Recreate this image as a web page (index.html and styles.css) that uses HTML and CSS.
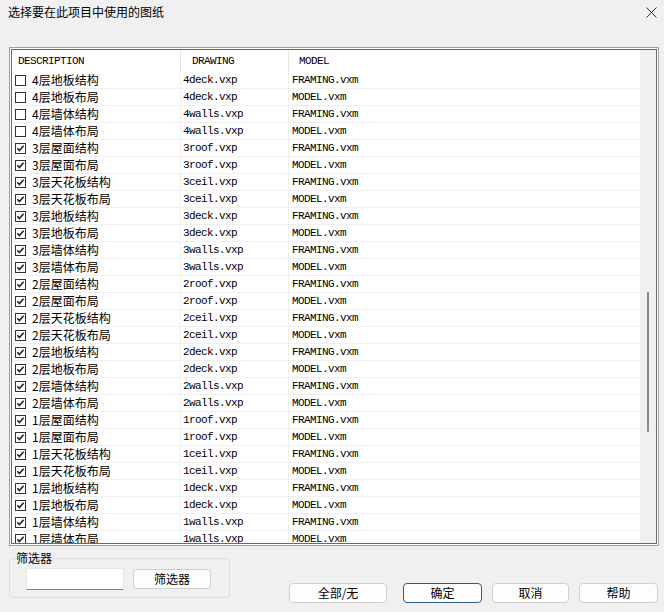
FILE: index.html
```html
<!DOCTYPE html>
<html lang="zh-CN">
<head>
    <meta charset="UTF-8">
    <meta name="viewport" content="width=device-width, initial-scale=1.0">
    <link rel="stylesheet" href="styles.css">
    <title>选择要在此项目中使用的图纸</title>
</head>
<body>

    <div class="titlebar">
        <span class="title">选择要在此项目中使用的图纸</span>
        <svg class="close" width="11" height="11" viewBox="0 0 11 11">
            <path d="M0.5 0.5 L10.5 10.5 M10.5 0.5 L0.5 10.5" stroke="#333" stroke-width="1" fill="none"/>
        </svg>
    </div>

    <div class="listbox">
        <div class="listinner">
            <div class="grid">
                <div class="head">
                    <div class="c1 mono">DESCRIPTION</div>
                    <div class="c2 mono">DRAWING</div>
                    <div class="c3 mono">MODEL</div>
                </div>

                <div class="row"><div class="c1"><span class="box"></span>4层地板结构</div><div class="c2 mono">4deck.vxp</div><div class="c3 mono">FRAMING.vxm</div></div>
                <div class="row"><div class="c1"><span class="box"></span>4层地板布局</div><div class="c2 mono">4deck.vxp</div><div class="c3 mono">MODEL.vxm</div></div>
                <div class="row"><div class="c1"><span class="box"></span>4层墙体结构</div><div class="c2 mono">4walls.vxp</div><div class="c3 mono">FRAMING.vxm</div></div>
                <div class="row"><div class="c1"><span class="box"></span>4层墙体布局</div><div class="c2 mono">4walls.vxp</div><div class="c3 mono">MODEL.vxm</div></div>

                <div class="row"><div class="c1"><span class="box checked"></span>3层屋面结构</div><div class="c2 mono">3roof.vxp</div><div class="c3 mono">FRAMING.vxm</div></div>
                <div class="row"><div class="c1"><span class="box checked"></span>3层屋面布局</div><div class="c2 mono">3roof.vxp</div><div class="c3 mono">MODEL.vxm</div></div>
                <div class="row"><div class="c1"><span class="box checked"></span>3层天花板结构</div><div class="c2 mono">3ceil.vxp</div><div class="c3 mono">FRAMING.vxm</div></div>
                <div class="row"><div class="c1"><span class="box checked"></span>3层天花板布局</div><div class="c2 mono">3ceil.vxp</div><div class="c3 mono">MODEL.vxm</div></div>
                <div class="row"><div class="c1"><span class="box checked"></span>3层地板结构</div><div class="c2 mono">3deck.vxp</div><div class="c3 mono">FRAMING.vxm</div></div>
                <div class="row"><div class="c1"><span class="box checked"></span>3层地板布局</div><div class="c2 mono">3deck.vxp</div><div class="c3 mono">MODEL.vxm</div></div>
                <div class="row"><div class="c1"><span class="box checked"></span>3层墙体结构</div><div class="c2 mono">3walls.vxp</div><div class="c3 mono">FRAMING.vxm</div></div>
                <div class="row"><div class="c1"><span class="box checked"></span>3层墙体布局</div><div class="c2 mono">3walls.vxp</div><div class="c3 mono">MODEL.vxm</div></div>

                <div class="row"><div class="c1"><span class="box checked"></span>2层屋面结构</div><div class="c2 mono">2roof.vxp</div><div class="c3 mono">FRAMING.vxm</div></div>
                <div class="row"><div class="c1"><span class="box checked"></span>2层屋面布局</div><div class="c2 mono">2roof.vxp</div><div class="c3 mono">MODEL.vxm</div></div>
                <div class="row"><div class="c1"><span class="box checked"></span>2层天花板结构</div><div class="c2 mono">2ceil.vxp</div><div class="c3 mono">FRAMING.vxm</div></div>
                <div class="row"><div class="c1"><span class="box checked"></span>2层天花板布局</div><div class="c2 mono">2ceil.vxp</div><div class="c3 mono">MODEL.vxm</div></div>
                <div class="row"><div class="c1"><span class="box checked"></span>2层地板结构</div><div class="c2 mono">2deck.vxp</div><div class="c3 mono">FRAMING.vxm</div></div>
                <div class="row"><div class="c1"><span class="box checked"></span>2层地板布局</div><div class="c2 mono">2deck.vxp</div><div class="c3 mono">MODEL.vxm</div></div>
                <div class="row"><div class="c1"><span class="box checked"></span>2层墙体结构</div><div class="c2 mono">2walls.vxp</div><div class="c3 mono">FRAMING.vxm</div></div>
                <div class="row"><div class="c1"><span class="box checked"></span>2层墙体布局</div><div class="c2 mono">2walls.vxp</div><div class="c3 mono">MODEL.vxm</div></div>

                <div class="row"><div class="c1"><span class="box checked"></span>1层屋面结构</div><div class="c2 mono">1roof.vxp</div><div class="c3 mono">FRAMING.vxm</div></div>
                <div class="row"><div class="c1"><span class="box checked"></span>1层屋面布局</div><div class="c2 mono">1roof.vxp</div><div class="c3 mono">MODEL.vxm</div></div>
                <div class="row"><div class="c1"><span class="box checked"></span>1层天花板结构</div><div class="c2 mono">1ceil.vxp</div><div class="c3 mono">FRAMING.vxm</div></div>
                <div class="row"><div class="c1"><span class="box checked"></span>1层天花板布局</div><div class="c2 mono">1ceil.vxp</div><div class="c3 mono">MODEL.vxm</div></div>
                <div class="row"><div class="c1"><span class="box checked"></span>1层地板结构</div><div class="c2 mono">1deck.vxp</div><div class="c3 mono">FRAMING.vxm</div></div>
                <div class="row"><div class="c1"><span class="box checked"></span>1层地板布局</div><div class="c2 mono">1deck.vxp</div><div class="c3 mono">MODEL.vxm</div></div>
                <div class="row"><div class="c1"><span class="box checked"></span>1层墙体结构</div><div class="c2 mono">1walls.vxp</div><div class="c3 mono">FRAMING.vxm</div></div>
                <div class="row"><div class="c1"><span class="box checked"></span>1层墙体布局</div><div class="c2 mono">1walls.vxp</div><div class="c3 mono">MODEL.vxm</div></div>
            </div>
            <div class="scrollbar"><div class="thumb"></div></div>
        </div>
    </div>

    <div class="bottom">
        <fieldset class="filter">
            <legend>筛选器</legend>
            <div class="filter-row">
                <input type="text" class="filter-input">
                <button type="button" class="btn filter-btn">筛选器</button>
            </div>
        </fieldset>

        <div class="actions">
            <button type="button" class="btn btn-all">全部/无</button>
            <button type="button" class="btn btn-ok">确定</button>
            <button type="button" class="btn btn-cancel">取消</button>
            <button type="button" class="btn btn-help">帮助</button>
        </div>
    </div>

</body>
</html>
```

FILE: styles.css
```css
body {
    margin: 0;
    width: 664px;
    height: 612px;
    overflow: hidden;
    background-color: #f0f0f0;
    font-family: "Noto Sans CJK SC", sans-serif;
    font-size: 12px;
    color: #000;
}

.titlebar {
    display: flex;
    justify-content: space-between;
    align-items: center;
    height: 24px;
    padding: 0 7px 0 8px;
}

.title {
    line-height: 14px;
}

/* list view */

.listbox {
    box-sizing: border-box;
    width: 650px;
    height: 499px;
    margin: 23px 0 0 9px;
    padding: 1px;
    border: 1px solid #a0a0a0;
    background-color: #fff;
}

.listinner {
    box-sizing: border-box;
    display: flex;
    height: 100%;
    border: 1px solid #696969;
}

.grid {
    flex: 1;
    overflow: hidden;
}

.mono {
    font-family: "Liberation Mono", monospace;
    font-size: 11px;
    letter-spacing: -0.6px;
}

.head {
    display: flex;
    height: 22px;
    line-height: 22px;
}

.row {
    display: flex;
    height: 16px;
    line-height: 16px;
    border-bottom: 1px solid #f0f0f0;
    white-space: nowrap;
}

.c1 {
    box-sizing: border-box;
    width: 169px;
    border-right: 1px solid #f0f0f0;
}

.c2 {
    box-sizing: border-box;
    width: 108px;
    border-right: 1px solid #f0f0f0;
}

.c3 {
    flex: 1;
}

.head .c1 {
    padding-left: 6px;
    border-right-color: #e5e5e5;
}

.head .c2 {
    padding-left: 11px;
    border-right-color: #e5e5e5;
}

.head .c3 {
    padding-left: 10px;
}

.row .c1 {
    display: flex;
    align-items: center;
    padding-left: 3px;
}

.row .c2 {
    padding-left: 2px;
}

.row .c3 {
    padding-left: 3px;
}

.box {
    box-sizing: border-box;
    width: 11px;
    height: 11px;
    margin-right: 6px;
    border: 1px solid #333;
    background-color: #fff;
}

.box.checked {
    background: #fff url("data:image/svg+xml;utf8,<svg xmlns='http://www.w3.org/2000/svg' width='9' height='9' viewBox='0 0 9 9'><path d='M1.3 4.3 L3.4 6.5 L7.6 1.8' stroke='%23222' stroke-width='1.6' fill='none'/></svg>") no-repeat center;
}

.scrollbar {
    width: 16px;
    background-color: #f0f0f0;
}

.thumb {
    width: 2px;
    height: 140px;
    margin: 242px 0 0 7px;
    border-radius: 1px;
    background-color: #8a8a8a;
}

/* bottom area */

.bottom {
    display: flex;
    align-items: flex-start;
}

.filter {
    box-sizing: border-box;
    width: 221px;
    margin: 5px 0 0 9px;
    padding: 3px 0 7px 6px;
    border: 1px solid #dcdcdc;
    border-radius: 4px;
}

.filter legend {
    padding: 0;
    line-height: 14px;
}

.filter-row {
    display: flex;
    align-items: flex-start;
    margin-left: 10px;
}

.filter-input {
    box-sizing: border-box;
    width: 98px;
    height: 22px;
    margin: 0;
    padding: 0 4px;
    border: 1px solid #e5e5e5;
    border-bottom-color: #868686;
    background-color: #fff;
}

.btn {
    box-sizing: border-box;
    height: 20px;
    padding: 0;
    border: 1px solid #d0d0d0;
    border-radius: 4px;
    background-color: #fdfdfd;
    font-family: "Noto Sans CJK SC", sans-serif;
    font-size: 12px;
    line-height: 18px;
    color: #000;
}

.filter-btn {
    width: 78px;
    margin: 1px 0 0 9px;
}

.actions {
    display: flex;
    margin: 37px 0 0 59px;
}

.btn-all {
    width: 98px;
}

.btn-ok {
    width: 79px;
    margin-left: 16px;
    border-color: #2b5d8a;
}

.btn-cancel {
    width: 77px;
    margin-left: 10px;
}

.btn-help {
    width: 79px;
    margin-left: 10px;
}
```
